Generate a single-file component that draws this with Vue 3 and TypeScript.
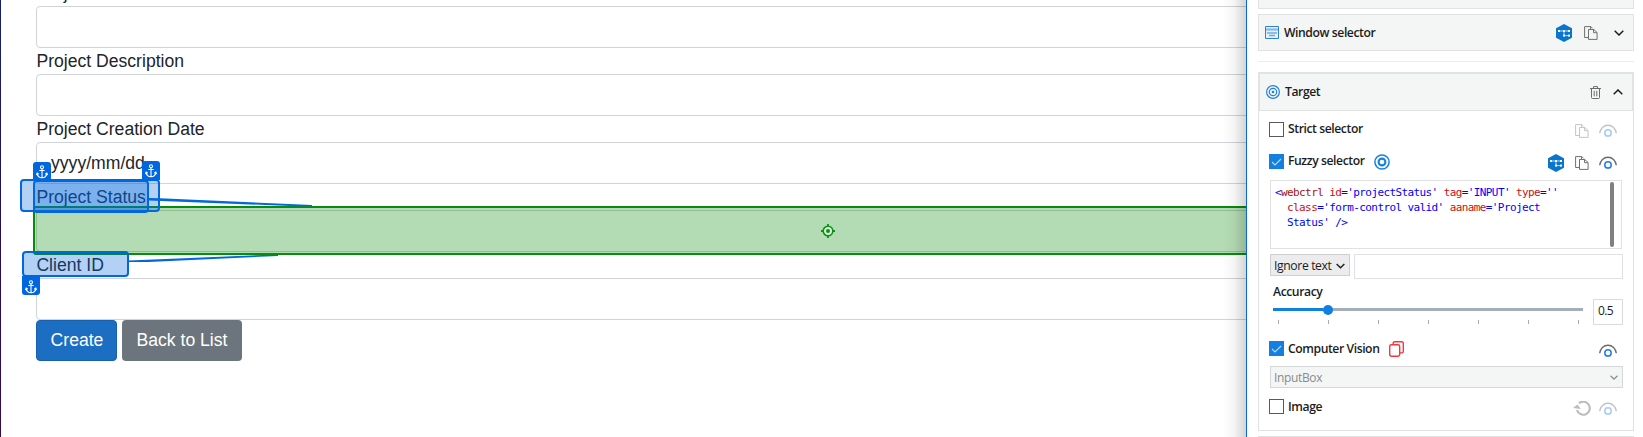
<script setup lang="ts">
interface Token { kind: string; text: string }

const fields = [
  { label: 'Project Name', value: '' },
  { label: 'Project Description', value: '' },
  { label: 'Project Creation Date', value: 'yyyy/mm/dd' },
  { label: 'Project Status', value: '' },
  { label: 'Client ID', value: '' },
]

const code: Token[][] = [
  [
    { kind: 'val', text: '<' }, { kind: 'tag', text: 'webctrl' }, { kind: 'attr', text: ' id' },
    { kind: 'val', text: "='projectStatus'" }, { kind: 'attr', text: ' tag' }, { kind: 'val', text: "='INPUT'" },
    { kind: 'attr', text: ' type' }, { kind: 'val', text: "=''" },
  ],
  [
    { kind: 'attr', text: '  class' }, { kind: 'val', text: "='form-control valid'" },
    { kind: 'attr', text: ' aaname' }, { kind: 'val', text: "='Project" },
  ],
  [{ kind: 'val', text: "  Status' />" }],
]

const ticks = [0, 1, 2, 3, 4, 5, 6]
const anchors = ['a1', 'a2', 'a3']
</script>

<template>
  <div class="screen">
    <svg class="defs" width="0" height="0">
      <symbol id="anchor" viewBox="0 0 12 14">
        <g fill="none" stroke="#fff" stroke-width="1.1">
          <circle cx="6" cy="2.2" r="1.500" />
          <path d="M6 3.800V12.600M3.300 5.500h5.400M1.200 8.600c.3 2.500 2 4 4.800 4.200 2.800-.2 4.500-1.700 4.800-4.200M.4 10l.8-2 1.700 1.100M11.600 10l-.8-2-1.700 1.100" />
        </g>
      </symbol>
      <symbol id="eye" viewBox="0 0 18 13">
        <path d="M.7 9.200C1.200 4.400 4.800 1.200 9 1.200s7.800 3.200 8.300 8" fill="none" stroke="#6b6b6b" stroke-width="1.4" />
        <circle cx="9" cy="8.900" r="3.200" fill="none" stroke="#1f7fe0" stroke-width="1.5" />
      </symbol>
      <symbol id="copy" viewBox="0 0 14 14">
        <path d="M4.500 11.500H.6V.6h6.200l1.700 1.700M4.500 3.500h5.300l3.300 3v6.900H4.500zM9.500 3.500v3.200h3.500M6.600.6v2.700" fill="none" stroke="#707070" stroke-width="1" />
      </symbol>
      <symbol id="hex" viewBox="0 0 16 18">
        <path d="M8 0l8 4.200v9.600L8 18 0 13.800V4.200z" fill="#0a75cc" />
        <path d="M3 7h10M8 7v4.600M8 11.600h5" stroke="#cfe6f8" stroke-width=".9" fill="none" />
        <g fill="#fff"><rect x="2" y="6" width="2" height="2" /><rect x="7" y="6" width="2" height="2" /><rect x="12" y="6" width="2" height="2" /><rect x="7" y="10.600" width="2" height="2" /><rect x="12" y="10.600" width="2" height="2" /></g>
      </symbol>
      <symbol id="rings" viewBox="0 0 16 16">
        <g fill="none" stroke="#1780df"><circle cx="8" cy="8" r="7.100" stroke-width="1.500" /><circle cx="8" cy="8" r="3.400" stroke-width="2.100" /></g>
      </symbol>
      <symbol id="chev" viewBox="0 0 10 6">
        <path d="M.7.8L5 5 9.300.8" fill="none" stroke="currentColor" stroke-width="1.500" />
      </symbol>
    </svg>

    <main class="page">
      <form class="form">
        <div v-for="f in fields" :key="f.label" class="field">
          <label>{{ f.label }}</label>
          <div class="control">{{ f.value }}</div>
        </div>
        <div class="buttons">
          <span class="btn primary">Create</span>
          <span class="btn">Back to List</span>
        </div>
      </form>

      <div class="hit">
        <svg width="14" height="14" viewBox="0 0 14 14">
          <circle cx="7" cy="7" r="4.800" fill="#d9efd9" stroke="#0b8f16" stroke-width="1.600" />
          <circle cx="7" cy="7" r="2" fill="#0b8f16" />
          <path d="M7 0v3M7 11v3M0 7h3M11 7h3" stroke="#0b8f16" stroke-width="1.800" />
        </svg>
      </div>
      <svg class="links" width="330" height="64" viewBox="0 198 330 64">
        <path d="M149 198L160 198.300 312 205v1.200H296L149 200.600zM129 260.500L262 255h16v1L129 262.900z" fill="#0067df" />
      </svg>
      <div class="mark outer"></div>
      <div class="mark inner"></div>
      <div class="mark client"></div>
      <div v-for="a in anchors" :key="a" class="anchor" :class="a">
        <svg width="12" height="14"><use href="#anchor" /></svg>
      </div>
      <div class="shade"></div>
    </main>

    <aside class="panel">
      <div class="card stub"></div>
      <div class="card bar">
        <svg width="14" height="13" viewBox="0 0 14 13">
          <path d="M.5.5h13v12H.5z" fill="#e4f0fb" stroke="#2f80d0" />
          <path d="M1 3.500h12" stroke="#7fb3e6" stroke-width="2" />
          <path d="M2 7h10M4 9.500h6" stroke="#6fa9e2" stroke-width="1.500" />
        </svg>
        <span class="t">Window selector</span>
        <svg class="push" width="16" height="18"><use href="#hex" /></svg>
        <svg class="g12" width="14" height="14"><use href="#copy" /></svg>
        <svg class="g16" width="10" height="6"><use href="#chev" /></svg>
      </div>
      <div class="rule"></div>
      <section class="card target">
        <header>
          <svg width="14" height="14" viewBox="0 0 14 14"><g fill="none" stroke="#2482dc"><circle cx="7" cy="7" r="6.400" stroke-width="1.200" /><circle cx="7" cy="7" r="3.700" stroke-width="1.200" /></g><circle cx="7" cy="7" r="1.300" fill="#2482dc" /></svg>
          <span class="t">Target</span>
          <svg class="push" width="11" height="13" viewBox="0 0 11 13"><path d="M0 2.500h11M3.500 2.500V.6h4v1.900M1.500 2.500v9q0 1 1 1h6q1 0 1-1v-9M4.200 4.800v5.500M6.800 4.800v5.500" fill="none" stroke="#6c6c6c" /></svg>
          <svg class="g12 flip" width="10" height="6"><use href="#chev" /></svg>
        </header>

        <div class="row strict">
          <i class="box"></i><span class="t">Strict selector</span>
          <svg class="push dim low" width="14" height="14"><use href="#copy" /></svg>
          <svg class="g10 dim low" width="18" height="13"><use href="#eye" /></svg>
        </div>
        <div class="row fuzzy">
          <i class="box on"><svg width="15" height="15"><path d="M3 8l3 3 6-6" fill="none" stroke="#b9dcfa" stroke-width="1.100" /></svg></i>
          <span class="t">Fuzzy selector</span>
          <svg class="g9" width="16" height="16"><use href="#rings" /></svg>
          <svg class="push low" width="16" height="18"><use href="#hex" /></svg>
          <svg class="g11 low" width="14" height="14"><use href="#copy" /></svg>
          <svg class="g10 low" width="18" height="13"><use href="#eye" /></svg>
        </div>

        <div class="code">
          <div class="lines"><div v-for="(line, i) in code" :key="i"><span v-for="(k, j) in line" :key="j" :class="k.kind">{{ k.text }}</span></div></div>
          <div class="thumb"></div>
        </div>

        <div class="ignore">
          <div class="select">Ignore text<svg width="9" height="6"><use href="#chev" /></svg></div>
          <div class="input"></div>
        </div>

        <div class="accuracy">
          <div class="left">
            <span class="t">Accuracy</span>
            <div class="track"><div class="fill"></div><div class="knob"></div></div>
            <div class="ticks"><i v-for="n in ticks" :key="n"></i></div>
          </div>
          <div class="num">0.5</div>
        </div>

        <div class="row cv">
          <i class="box on"><svg width="15" height="15"><path d="M3 8l3 3 6-6" fill="none" stroke="#b9dcfa" stroke-width="1.100" /></svg></i>
          <span class="t">Computer Vision</span>
          <svg class="g10" width="15" height="16" viewBox="0 0 15 16"><g fill="none" stroke="#f4373b" stroke-width="1.400"><rect x=".7" y="3.800" width="10" height="11.500" rx="1.700" /><path d="M4.200 3.600V2.300Q4.200.7 5.800.7h6.900q1.600 0 1.600 1.600v8q0 1.600-1.600 1.600h-1.800" /></g></svg>
          <svg class="push lower" width="18" height="13"><use href="#eye" /></svg>
        </div>

        <div class="combo">InputBox<svg width="8" height="5"><use href="#chev" /></svg></div>

        <div class="row img">
          <i class="box"></i><span class="t">Image</span>
          <svg class="push lower" width="18" height="16" viewBox="0 0 18 16"><path d="M6 2.300A6.500 6.500 0 1 1 4 9" fill="none" stroke="#bdbdbd" stroke-width="2.200" /><path d="M0 7L4.400 3.500 8 8z" fill="#bdbdbd" /></svg>
          <svg class="g8 dim lower" width="18" height="13"><use href="#eye" /></svg>
        </div>
      </section>
      <div class="card next"></div>
    </aside>
  </div>
</template>

<style>
body { overflow: hidden; background: #fff; }
</style>

<style scoped>
* { box-sizing: border-box; }
svg { flex: none; display: block; }
.defs { position: absolute; }
.screen { display: flex; width: 1643px; height: 437px; overflow: hidden; background: #fff; }

.page { position: relative; width: 1246px; height: 437px; overflow: hidden; font: 17.600px/26px "Liberation Sans", Arial, sans-serif; color: #212529; }
.page::before { content: ""; position: absolute; left: 0; top: 0; width: 1px; height: 437px; background: linear-gradient(#15206e, #22105a 50%, #350a50); }
.form { margin: -20px 0 0 36px; width: 1300px; }
.field label { display: block; height: 26px; padding-left: .4px; white-space: nowrap; }
.control { height: 42px; border: 1px solid #ced4da; border-radius: 4px; padding: 7px 14px; background: #fff; }
.buttons { display: flex; gap: 5px; }
.btn { height: 41px; width: 120px; border-radius: 4px; text-align: center; line-height: 40px; color: #fff; background: #6c757d; }
.btn.primary { width: 81px; background: #1b6ec2; border: 1px solid #1861ac; line-height: 38px; padding-left: 1px; }

.hit { position: absolute; left: 33px; top: 206px; width: 1590px; height: 49px; border: 2px solid #078c0d; border-radius: 3px; background: rgba(7, 140, 7, .3); }
.hit svg { margin: 16px 0 0 786px; }
.links { position: absolute; left: 0; top: 198px; }
.mark { position: absolute; border: 2px solid #0067df; border-radius: 4px; background: rgba(0, 103, 223, .3); }
.outer { left: 20px; top: 179px; width: 140px; height: 33px; }
.inner { left: 33px; top: 180px; width: 116px; height: 33px; }
.client { left: 22px; top: 251px; width: 107px; height: 26px; }
.anchor { position: absolute; width: 18px; height: 19px; background: #0067df; display: flex; align-items: center; justify-content: center; border-radius: 3px 3px 0 0; }
.a1 { left: 33px; top: 162px; }
.a2 { left: 142px; top: 161px; }
.a3 { left: 22px; top: 276px; border-radius: 0 0 3px 3px; }
.a3 svg { margin-top: 2px; }
.shade { position: absolute; right: 0; top: 0; width: 24px; height: 437px; background: linear-gradient(90deg, rgba(0, 0, 0, 0), rgba(0, 0, 0, .04) 50%, rgba(0, 0, 0, .17)); }

.panel { width: 397px; height: 437px; padding: 0 9px 0 11px; border-left: 1px solid #0a68d6; background: #fff; font: 12.500px/16px "Open Sans", "Noto Sans", sans-serif; color: #1c1c1c; }
.card { border: 1px solid #e1e3e3; background: #f4f6f6; }
.stub { height: 9px; border-top: 0; }
.bar { height: 37px; margin-top: 5px; display: flex; align-items: center; padding: 0 9px 0 6px; }
.rule { height: 1px; margin: 10px 0; background: #ececec; }
.target { height: 359px; background: #fff; }
header { height: 38px; border: 1px solid #e1e3e3; background: #f4f6f6; display: flex; align-items: center; padding: 0 9px 0 6px; }
.t { font-weight: 600; font-size: 12.200px; letter-spacing: -.43px; white-space: nowrap; }
.bar .t, header .t { margin-left: 5px; }
.push { margin-left: auto; }
.g8 { margin-left: 8px; } .g9 { margin-left: 9px; } .g10 { margin-left: 10px; } .g11 { margin-left: 11px; } .g12 { margin-left: 12px; } .g16 { margin-left: 16px; }
.flip { transform: rotate(180deg); }
.dim { opacity: .4; }
.row { display: flex; align-items: center; height: 15px; padding: 0 16px 0 10px; }
.row .t { margin: -1px 0 0 4px; }
.low { margin-top: 2px; }
.lower { margin-top: 4px; }
.strict { margin-top: 11px; }
.fuzzy { margin-top: 17px; }
.box { width: 15px; height: 15px; border: 1px solid #5a5a5a; background: #fff; flex: none; }
.box.on { border: 0; background: #1380e0; }
.code { margin: 11px 11px 0; height: 69px; border: 1px solid #dfe1e2; display: flex; justify-content: space-between; padding: 1px 7px 1px 4px; }
.lines { padding-top: 3px; font: 11px/15px "DejaVu Sans Mono", monospace; letter-spacing: -.6px; white-space: pre; }
.val { color: #00f; } .tag { color: #a31515; } .attr { color: #c8101a; }
.thumb { width: 4px; height: 65px; border-radius: 2px; background: #808080; }
.ignore { display: flex; margin: 5px 10px 0 11px; gap: 4px; }
.select { width: 80px; height: 22px; border: 1px solid #cfcfd2; background: #ececef; display: flex; align-items: center; justify-content: space-between; padding: 1px 4px 0 3px; font-size: 12.200px; letter-spacing: -.38px; white-space: nowrap; }
.input { flex: 1; height: 25px; border: 1px solid #dfe1e2; }
.accuracy { display: flex; margin: 4px 10px 0 14px; height: 43px; }
.left { width: 310px; display: flex; flex-direction: column; }
.left .t { padding-top: 1px; height: 16px; }
.track { height: 3px; margin-top: 9px; background: #a3aeb8; display: flex; align-items: center; }
.fill { width: 50px; height: 3px; background: #0f7fe0; }
.knob { width: 10px; height: 10px; border-radius: 50%; background: #0f7fe0; flex: none; }
.ticks { display: flex; justify-content: space-between; margin: 9px 4px 0 5px; }
.ticks i { width: 1px; height: 4px; background: #a3aeb8; }
.num { margin: 16px 0 0 10px; width: 30px; height: 26px; border: 1px solid #d8dadb; padding: 3px 0 0 4px; font-size: 12px; letter-spacing: -.6px; }
.cv { margin-top: 15px; }
.cv .t { margin-top: 0; }
.combo { margin: 10px 10px 0 11px; height: 22px; border: 1px solid #d5d8d9; background: #f4f6f6; color: #8a8a8a; display: flex; align-items: center; justify-content: space-between; padding: 1px 4px 0 3px; font-size: 12px; letter-spacing: -.35px; }
.img { margin-top: 11px; }
.img .t { margin-top: 0; }
.next { height: 10px; margin-top: 5px; }
</style>
